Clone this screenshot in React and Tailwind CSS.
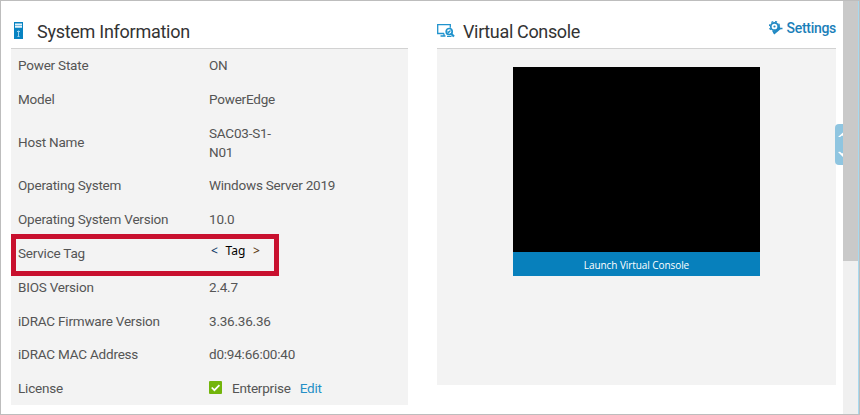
const rows = [
  ['Power State', 'ON'],
  ['Model', 'PowerEdge'],
  ['Host Name', 'SAC03-S1-N01'],
  ['Operating System', 'Windows Server 2019'],
  ['Operating System Version', '10.0'],
  ['Service Tag', '< Tag >'],
  ['BIOS Version', '2.4.7'],
  ['iDRAC Firmware Version', '3.36.36.36'],
  ['iDRAC MAC Address', 'd0:94:66:00:40'],
  ['License', 'Enterprise'],
];

function ServerIcon() {
  return (
    <svg className="mb-px h-[17px] w-[9px]" viewBox="0 0 9 17">
      <path fill="#78bce0" d="M0 0h9v7H0z" />
      <path fill="#0783c2" d="M0 0h9v1H0zM0 0h1v7H0zM8 0h1v7H8zM0 6h9v11H0z" />
      <path fill="#e4f3fb" d="M1 2h7v1H1zM1 4h7v1.500H1z" />
      <path fill="none" stroke="#9fd2ed" d="M4.500 8.500v5.500M3 9.500h3M3.500 14.500h2" />
    </svg>
  );
}

function ConsoleIcon() {
  return (
    <svg className="mb-px h-[15px] w-[18px]" viewBox="0 0 18 15" fill="none" stroke="#2093cd" strokeWidth="1.300">
      <path d="M7 9.500H.7V.7h12.600v3M7 9.500v2.500M3.500 12h5" />
      <circle cx="12.200" cy="7.500" r="3" strokeWidth="1.700" />
      <path strokeWidth="2.200" d="m14 9.500 3 3" />
      <path d="m10.500 7.500 1 1 2-2M10 12.300h4.500" />
    </svg>
  );
}

function SettingsIcon() {
  return (
    <svg className="mb-px h-[14px] w-[14px]" viewBox="0 0 14 14" fill="none" stroke="#2189c3">
      <circle cx="5.500" cy="5.500" r="3.700" strokeWidth="1.700" />
      <circle cx="5.500" cy="5.500" r="5" strokeWidth="1.300" strokeDasharray="2 1.930" />
      <circle cx="5.500" cy="5.500" r="1.100" fill="#2189c3" stroke="none" />
      <path strokeWidth="2.400" d="M4.500 12.500 11 7" />
      <path strokeWidth="1.500" d="M10 4v2.500l1 1H13.500" />
    </svg>
  );
}

function Row({ label, value }) {
  const height = label === 'Host Name' ? 'h-[52.500px]' : 'h-[33.800px]';
  return (
    <div className={`flex shrink-0 items-center ${height}`}>
      <div className="w-[198px] pl-[7px]">{label}</div>
      {label === 'Host Name' ? (
        <div className="w-[80px] pt-px leading-[19px]">SAC03-S1-<br />N01</div>
      ) : label === 'Service Tag' ? (
        <div className="flex w-[51px] justify-between pb-[4px] pl-[2px] font-['Noto_Sans',sans-serif] text-[12px] font-normal tracking-[0.1px] text-black">
          <span className="font-medium text-[#173e6b]">&lt;</span><span>Tag</span><span className="font-medium text-[#5e4018]">&gt;</span>
        </div>
      ) : label === 'License' ? (
        <div className="flex items-center">
          <svg className="mb-px mr-[10px] h-[13px] w-[13px]" viewBox="0 0 13 13">
            <rect width="13" height="13" rx="1" fill="#73b50b" />
            <path d="m2.700 6.500 2.700 2.700 5-5" fill="none" stroke="white" strokeWidth="1.700" />
          </svg>
          {value}<span className="ml-[9px] text-[#258fc6]">Edit</span>
        </div>
      ) : (
        <div>{value}</div>
      )}
    </div>
  );
}

export default function App() {
  return (
    <div className="relative flex h-[415px] w-[860px] overflow-hidden border border-[#bdbdbd] bg-white font-[Roboto,sans-serif] text-[13.500px] font-normal tracking-[-0.21px] text-[#555]">
      <section className="ml-[10px] w-[397px] shrink-0">
        <header className="flex h-[47px] items-end pb-[8px] pl-[3px]">
          <ServerIcon />
          <h2 className="ml-[14px] text-[18px] font-normal leading-[16px] tracking-[-0.27px] text-[#333]">System Information</h2>
        </header>
        <div className="relative flex h-[357px] flex-col border-t border-[#d2d2d2] bg-[#f3f3f3]">
          <div className="-mt-[0.500px]">
            {rows.map(([label, value]) => <Row key={label} label={label} value={value} />)}
          </div>
          <div className="absolute left-0 top-[185px] h-[42px] w-[268px] border-[5px] border-[#c8102e]" />
        </div>
      </section>

      <section className="ml-[29px] w-[399px] shrink-0">
        <header className="flex h-[47px] items-end pb-[8px]">
          <ConsoleIcon />
          <h2 className="ml-[8px] text-[18px] font-normal leading-[16px] tracking-[-0.35px] text-[#333]">Virtual Console</h2>
          <div className="mb-[3px] ml-auto flex h-[18px] items-center text-[#1b80b9]">
            <SettingsIcon />
            <span className="ml-[4px] text-[14px] font-medium leading-[18px] tracking-[-0.300px]">Settings</span>
          </div>
        </header>
        <div className="flex h-[337px] justify-center border-t border-[#d2d2d2] bg-[#f3f3f3] pt-[18px]">
          <div className="flex h-[209px] w-[247px] flex-col bg-black">
            <div className="mt-auto flex h-[24px] items-center justify-center bg-[#0780bc] pt-[2px] font-['Open_Sans',sans-serif] text-[10px] font-normal tracking-[-0.07px] text-white">
              Launch Virtual Console
            </div>
          </div>
        </div>
      </section>

      <div className="ml-auto h-full w-[16px] shrink-0 border-r border-[#a7d9ef] bg-[#f0f0f0]">
        <div className="h-[260px] bg-[#c9c9c9]" />
      </div>
      <div className="absolute left-[834px] top-[123px] h-[41px] w-[8px] overflow-hidden rounded-l-[4px] bg-[#8fc5e0]">
        <svg className="h-full w-full" viewBox="0 0 8 41" fill="white">
          <path d="M3 13 8 8.500V12l-1-.6L5 13zM3 28l2-.3 2 1.900 1-.6v4z" />
        </svg>
      </div>
    </div>
  );
}
